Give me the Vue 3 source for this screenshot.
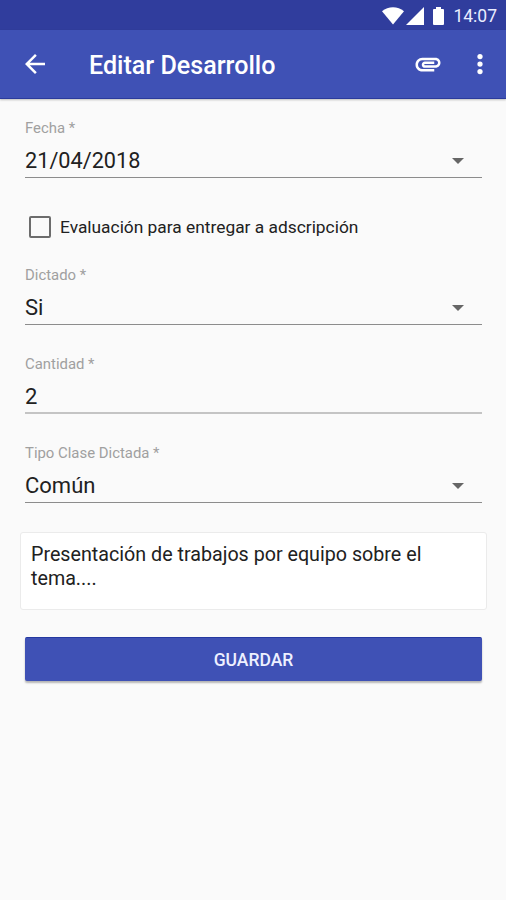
<script setup>
const date = { label: 'Fecha *', value: '21/04/2018', arrow: true }
const fields = [
  { label: 'Dictado *', value: 'Si', arrow: true },
  { label: 'Cantidad *', value: '2', arrow: false, light: true },
  { label: 'Tipo Clase Dictada *', value: 'Común', arrow: true },
]
</script>

<template>
  <div class="screen">
    <div class="status">
      <svg class="wifi" width="22" height="18" viewBox="0 0 22 18"><path d="M0 4.2C6.2-1.1 15.8-1.1 22 4.2L11 17.6z" /></svg>
      <svg class="signal" width="18" height="18" viewBox="0 0 18 18"><path d="M18 0v18H0z" /></svg>
      <svg class="battery" width="11" height="18" viewBox="0 0 11 18"><path d="M3 0h5v2h2a1 1 0 0 1 1 1v14a1 1 0 0 1-1 1H1a1 1 0 0 1-1-1V3a1 1 0 0 1 1-1h2z" /></svg>
      <span class="time">14:07</span>
    </div>
    <header class="bar">
      <svg class="back" width="30" height="30" viewBox="0 0 24 24"><path d="M20 11H7.830l5.590-5.590L12 4l-8 8 8 8 1.410-1.410L7.830 13H20z" /></svg>
      <h1 class="title">Editar Desarrollo</h1>
      <svg class="clip" width="30" height="30" viewBox="0 0 24 24"><path d="M2 12.500C2 9.460 4.460 7 7.500 7H18c2.210 0 4 1.790 4 4s-1.790 4-4 4H9.500C8.120 15 7 13.880 7 12.500S8.120 10 9.500 10H17v2H9.410c-.55 0-.55 1 0 1H18c1.100 0 2-.9 2-2s-.9-2-2-2H7.500C5.570 9 4 10.570 4 12.500S5.570 16 7.500 16H17v2H7.500C4.460 18 2 15.540 2 12.500z" /></svg>
      <svg class="more" width="30" height="30" viewBox="0 0 24 24"><circle cx="12" cy="6" r="2.100" /><circle cx="12" cy="12" r="2.100" /><circle cx="12" cy="18" r="2.100" /></svg>
    </header>

    <main class="form">
      <div class="field">
        <span class="label">{{ date.label }}</span>
        <div class="value date">
          <span>{{ date.value }}</span>
          <svg class="caret" width="12" height="6" viewBox="0 0 12 6"><path d="M0 0h12L6 6z" /></svg>
        </div>
      </div>

      <div class="check">
        <span class="box"></span>
        <span class="check-text">Evaluación para entregar a adscripción</span>
      </div>

      <div class="group">
        <div v-for="f in fields" :key="f.label" class="field" :class="{ light: f.light }">
          <span class="label">{{ f.label }}</span>
          <div class="value">
            <span>{{ f.value }}</span>
            <svg v-if="f.arrow" class="caret" width="12" height="6" viewBox="0 0 12 6"><path d="M0 0h12L6 6z" /></svg>
          </div>
        </div>
      </div>

      <div class="note">Presentación de trabajos por equipo sobre el tema....</div>
      <button class="save" type="button">GUARDAR</button>
    </main>
  </div>
</template>

<style>
body {
  background: #fafafa;
}
</style>

<style scoped>
.screen {
  height: 900px;
  overflow: hidden;
  background: #fafafa;
  font-family: Roboto, "Liberation Sans", sans-serif;
  color: #212121;
}
.status {
  display: flex;
  align-items: center;
  justify-content: flex-end;
  box-sizing: border-box;
  height: 30px;
  padding: 2px 9px 0 0;
  background: #303d9d;
  color: #e9edff;
}
.status svg,
.bar svg {
  flex: none;
  fill: #fff;
}
.signal {
  margin-left: 2px;
}
.battery {
  margin-left: 9px;
}
.time {
  margin-left: 9px;
  font-size: 17.5px;
  line-height: 28px;
}
.bar {
  display: flex;
  align-items: center;
  box-sizing: border-box;
  height: 69px;
  padding: 0 11.500px 0 20px;
  background: #3f51b5;
  border-bottom: 1px solid #2b3b9c;
  box-shadow: 0 1px 2px rgba(0, 0, 0, 0.25);
  color: #fff;
}
.title {
  flex: 1;
  margin: 4px 0 0 39px;
  font-size: 25.1px;
  font-weight: 500;
  line-height: 32px;
  white-space: nowrap;
}
.more {
  margin-left: 22px;
}
.form {
  padding: 20px 24px 0 25px;
}
.field {
  height: 59px;
  box-sizing: border-box;
  border-bottom: 1px solid #8c8c8c;
}
.field.light {
  border-bottom: 2px solid #c4c4c4;
}
.label {
  display: block;
  font-size: 14.9px;
  line-height: 18px;
  color: #a0a0a0;
}
.value {
  display: flex;
  align-items: center;
  justify-content: space-between;
  height: 28px;
  margin-top: 10px;
  font-size: 22px;
  line-height: 28px;
}
.value.date {
  font-size: 21.700px;
}
.caret {
  margin: 0 18px 1px 0;
  fill: #666;
}
.check {
  display: flex;
  align-items: center;
  height: 24px;
  margin: 37px 0 0 4px;
}
.box {
  box-sizing: border-box;
  width: 22px;
  height: 22px;
  border: 2px solid #6c6c6c;
  border-radius: 2px;
}
.check-text {
  margin-left: 9px;
  font-size: 17.35px;
  line-height: 24px;
  white-space: nowrap;
}
.group {
  display: grid;
  gap: 30px;
  margin-top: 27px;
}
.note {
  box-sizing: border-box;
  height: 78px;
  margin: 29px -5px 0;
  padding: 10px 20px 0 10px;
  border: 1px solid #ebebeb;
  border-radius: 3px;
  background: #fff;
  font-size: 19.7px;
  line-height: 23.500px;
}
.save {
  display: block;
  width: 100%;
  height: 44px;
  margin-top: 27px;
  padding: 0;
  border: 0;
  border-top: 1px solid #2438a0;
  border-radius: 2px;
  background: #3f51b5;
  box-shadow: 0 2px 2px rgba(0, 0, 0, 0.28);
  color: #eef0ff;
  font-family: inherit;
  font-size: 17.5px;
  font-weight: 500;
}
</style>
